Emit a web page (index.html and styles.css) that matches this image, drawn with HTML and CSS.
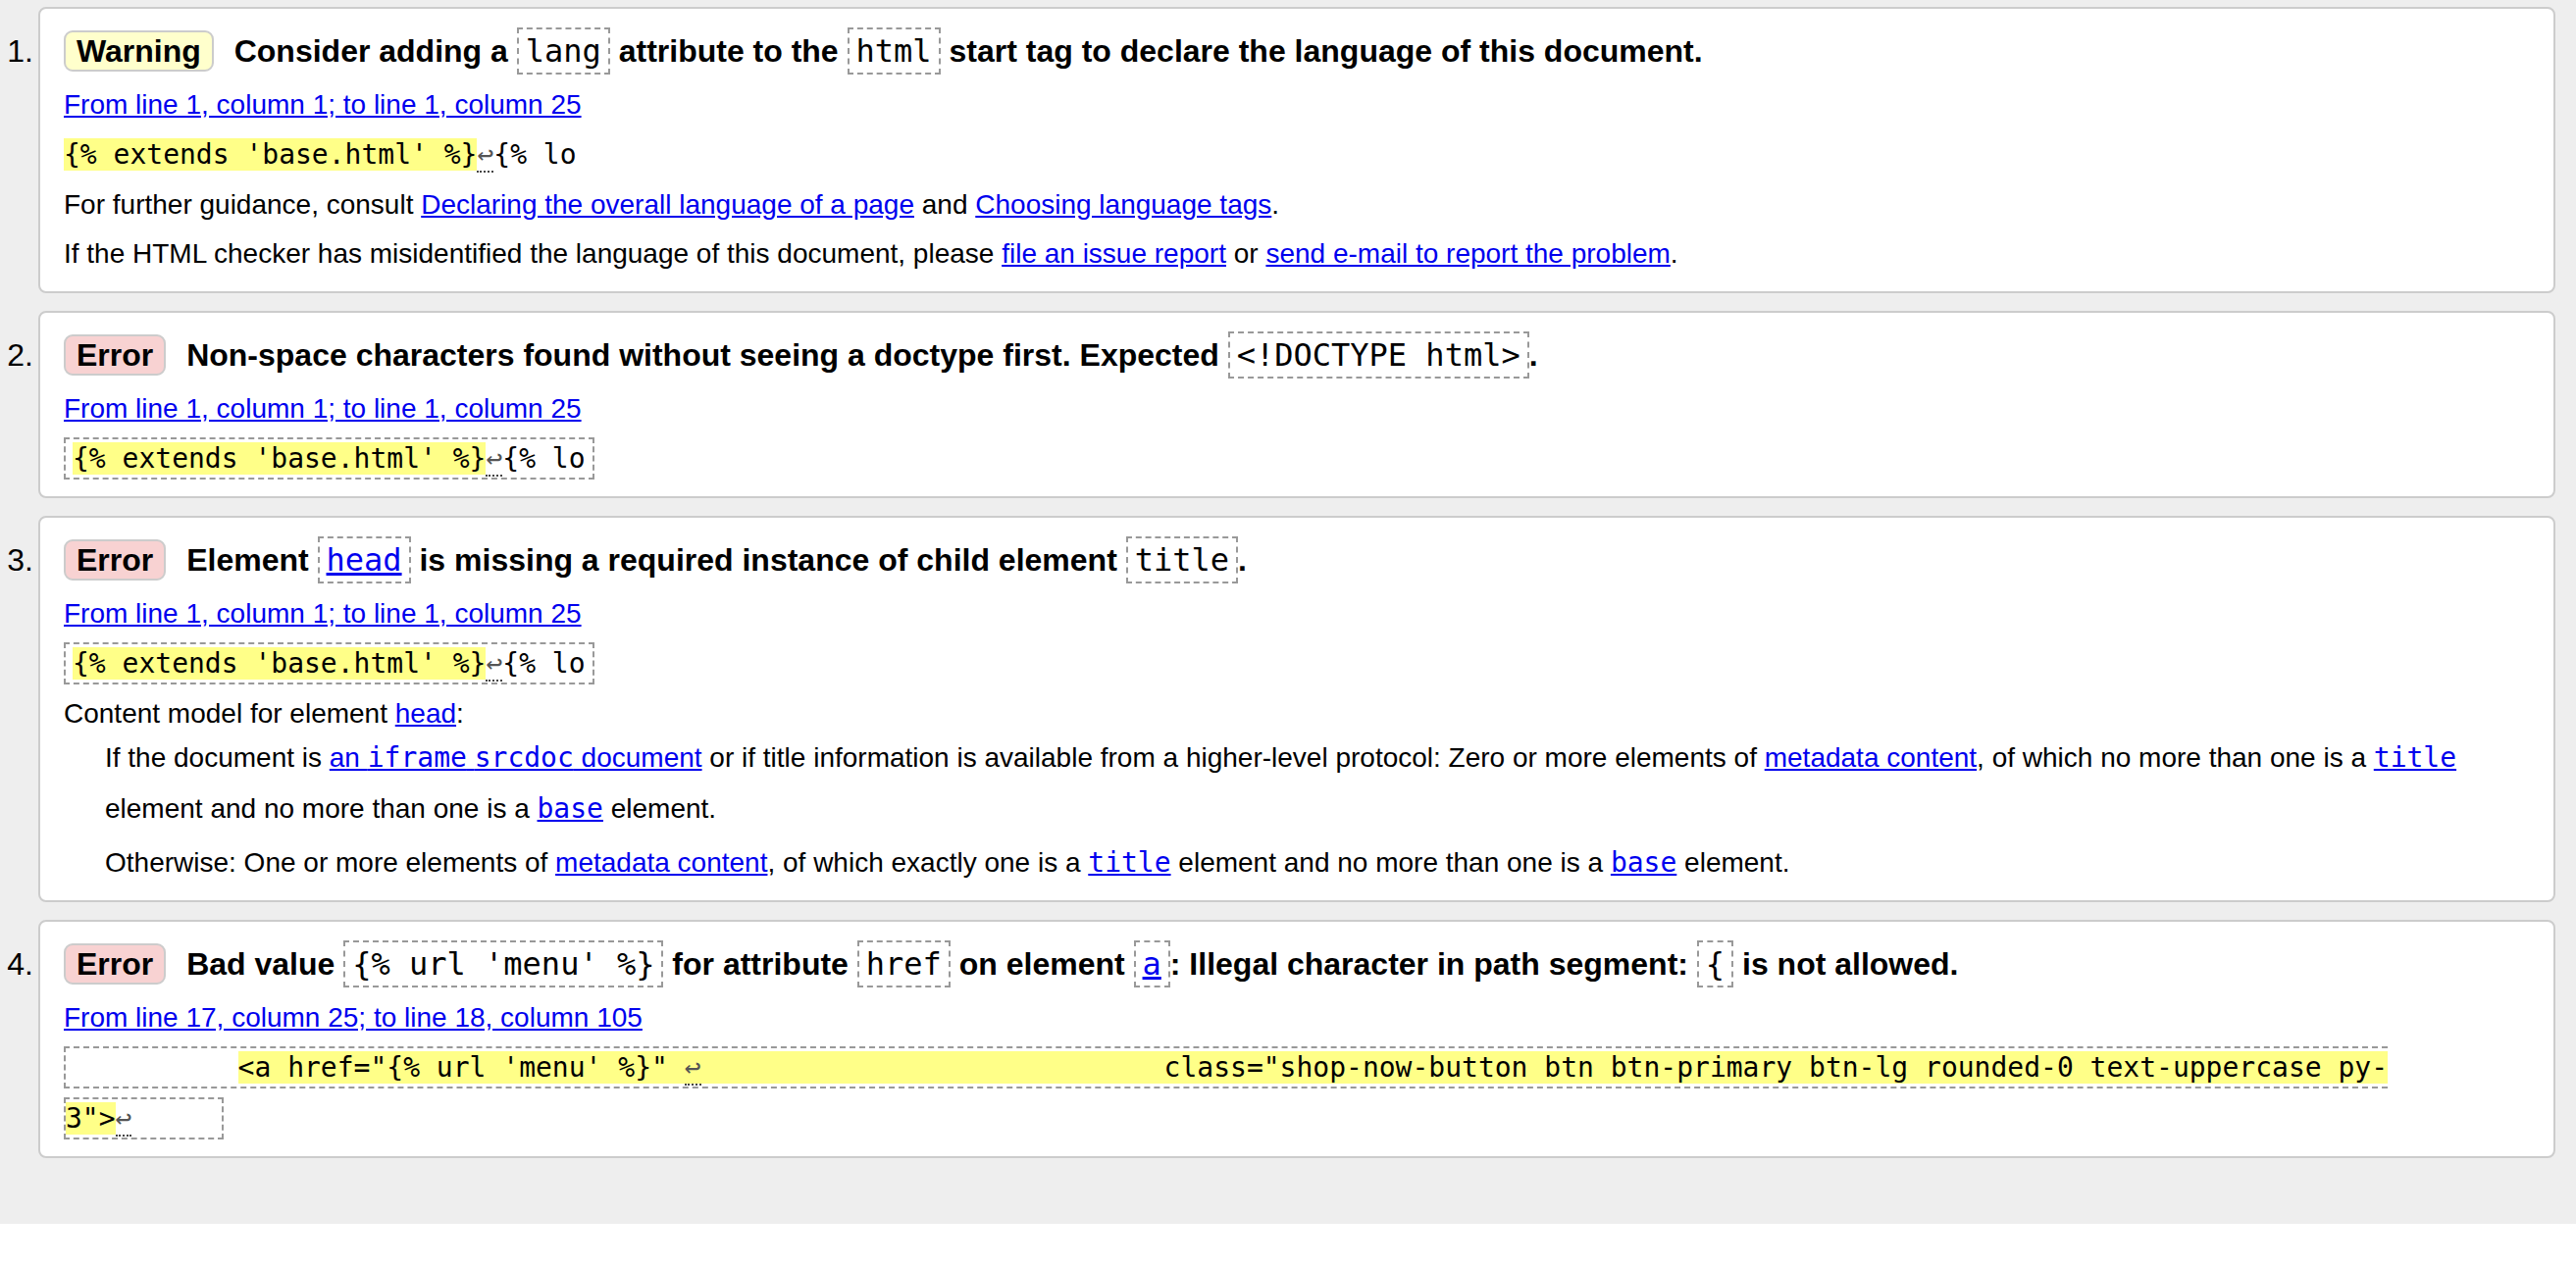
FILE: index.html
```html
<!DOCTYPE html>
<html lang="en">
<head>
<meta charset="utf-8">
<title>Nu Html Checker results</title>
<link rel="stylesheet" href="styles.css">
</head>
<body>
<div class="page">
<ol class="results">
  <li class="item">
    <span class="num">1.</span>
    <div class="card">
      <p class="msg"><strong class="badge warning">Warning</strong> <span>Consider adding a <code>lang</code> attribute to the <code>html</code> start tag to declare the language of this document.</span></p>
      <p class="loc"><a href="#">From line 1, column 1; to line 1, column 25</a></p>
      <p class="extract plain"><code class="src"><mark>{% extends 'base.html' %}</mark><span class="lf">↩</span>{% lo</code></p>
      <p class="text">For further guidance, consult <a href="#">Declaring the overall language of a page</a> and <a href="#">Choosing language tags</a>.</p>
      <p class="text">If the HTML checker has misidentified the language of this document, please <a href="#">file an issue report</a> or <a href="#">send e-mail to report the problem</a>.</p>
    </div>
  </li>
  <li class="item">
    <span class="num">2.</span>
    <div class="card">
      <p class="msg"><strong class="badge error">Error</strong> <span>Non-space characters found without seeing a doctype first. Expected <code>&lt;!DOCTYPE html&gt;</code>.</span></p>
      <p class="loc"><a href="#">From line 1, column 1; to line 1, column 25</a></p>
      <p class="extract"><code class="src"><mark>{% extends 'base.html' %}</mark><span class="lf">↩</span>{% lo</code></p>
    </div>
  </li>
  <li class="item">
    <span class="num">3.</span>
    <div class="card">
      <p class="msg"><strong class="badge error">Error</strong> <span>Element <code><a href="#">head</a></code> is missing a required instance of child element <code>title</code>.</span></p>
      <p class="loc"><a href="#">From line 1, column 1; to line 1, column 25</a></p>
      <p class="extract"><code class="src"><mark>{% extends 'base.html' %}</mark><span class="lf">↩</span>{% lo</code></p>
      <p class="text">Content model for element <a href="#">head</a>:</p>
      <div class="cm">
        <p>If the document is <a href="#">an <code>iframe</code> <code>srcdoc</code> document</a> or if title information is available from a higher-level protocol: Zero or more elements of <a href="#">metadata content</a>, of which no more than one is a <a href="#"><code>title</code></a> element and no more than one is a <a href="#"><code>base</code></a> element.</p>
        <p>Otherwise: One or more elements of <a href="#">metadata content</a>, of which exactly one is a <a href="#"><code>title</code></a> element and no more than one is a <a href="#"><code>base</code></a> element.</p>
      </div>
    </div>
  </li>
  <li class="item">
    <span class="num">4.</span>
    <div class="card">
      <p class="msg"><strong class="badge error">Error</strong> <span>Bad value <code>{% url 'menu' %}</code> for attribute <code>href</code> on element <code><a href="#">a</a></code>: Illegal character in path segment: <code>{</code> is not allowed.</span></p>
      <p class="loc"><a href="#">From line 17, column 25; to line 18, column 105</a></p>
      <p class="extract"><code class="src first">          <mark>&lt;a href="{% url 'menu' %}" <span class="lf">↩</span>                            class="shop-now-button btn btn-primary btn-lg rounded-0 text-uppercase py-</mark></code><br><code class="src last"><mark>3"&gt;</mark><span class="lf">↩</span>     </code></p>
    </div>
  </li>
</ol>
</div>
</body>
</html>
```

FILE: styles.css
```css
html {
  background: #fff;
}

body {
  margin: 0;
  font-family: "Liberation Sans", Arial, sans-serif;
  font-size: 28px;
  color: #000;
}

.page {
  background: #eee;
  padding: 7px 21px 67px 0;
}

.results {
  list-style: none;
  margin: 0;
  padding: 0;
}

.item {
  display: grid;
  grid-template-columns: 39px 1fr;
  margin-bottom: 18px;
}

.item:last-child {
  margin-bottom: 0;
}

.num {
  font-size: 32px;
  line-height: 48px;
  padding: 21px 5px 0 0;
  text-align: right;
}

.card {
  min-width: 0;
  background: #fff;
  border: 2px solid #ccc;
  border-radius: 8px;
  padding: 19px 24px 12px;
}

.card p {
  margin: 0;
}

a {
  color: #00e;
}

code {
  font-family: "DejaVu Sans Mono", monospace;
  font-size: 28px;
}

mark {
  background: #ff8;
  color: #000;
}

.msg {
  font-size: 32px;
  line-height: 48px;
  font-weight: bold;
}

.badge {
  display: inline-block;
  line-height: 36px;
  padding: 1px 11px;
  border: 2px solid #ccc;
  border-radius: 9px;
  margin-right: 12px;
}

.badge.warning {
  background: #ffc;
}

.badge.error {
  background: #f8d2d2;
}

.msg code {
  font-size: 32px;
  font-weight: normal;
  padding: 3px 7px;
  border: 2px dashed #999;
}

.card .loc {
  margin-top: 13px;
  line-height: 36px;
}

.card .extract {
  margin-top: 7px;
  line-height: 52px;
}

.src {
  white-space: pre;
  padding: 3px 7px;
  border: 2px dashed #999;
}

.plain .src {
  border-color: transparent;
  border-left: 0;
  border-right: 0;
  padding-left: 0;
  padding-right: 0;
}

.src.first {
  border-right: 0;
  padding-right: 0;
}

.src.last {
  padding-left: 0;
}

.lf {
  color: #555;
  border-bottom: 2px dotted #444;
}

.card .text {
  margin-top: 7px;
  line-height: 36px;
}

.card .text + .text {
  margin-top: 14px;
}

.card .text:last-child {
  margin-bottom: 8px;
}

.cm {
  margin: 1px 0 0 42px;
}

.cm p {
  line-height: 52px;
}

.card .cm p + p {
  margin-top: 3px;
}
```
